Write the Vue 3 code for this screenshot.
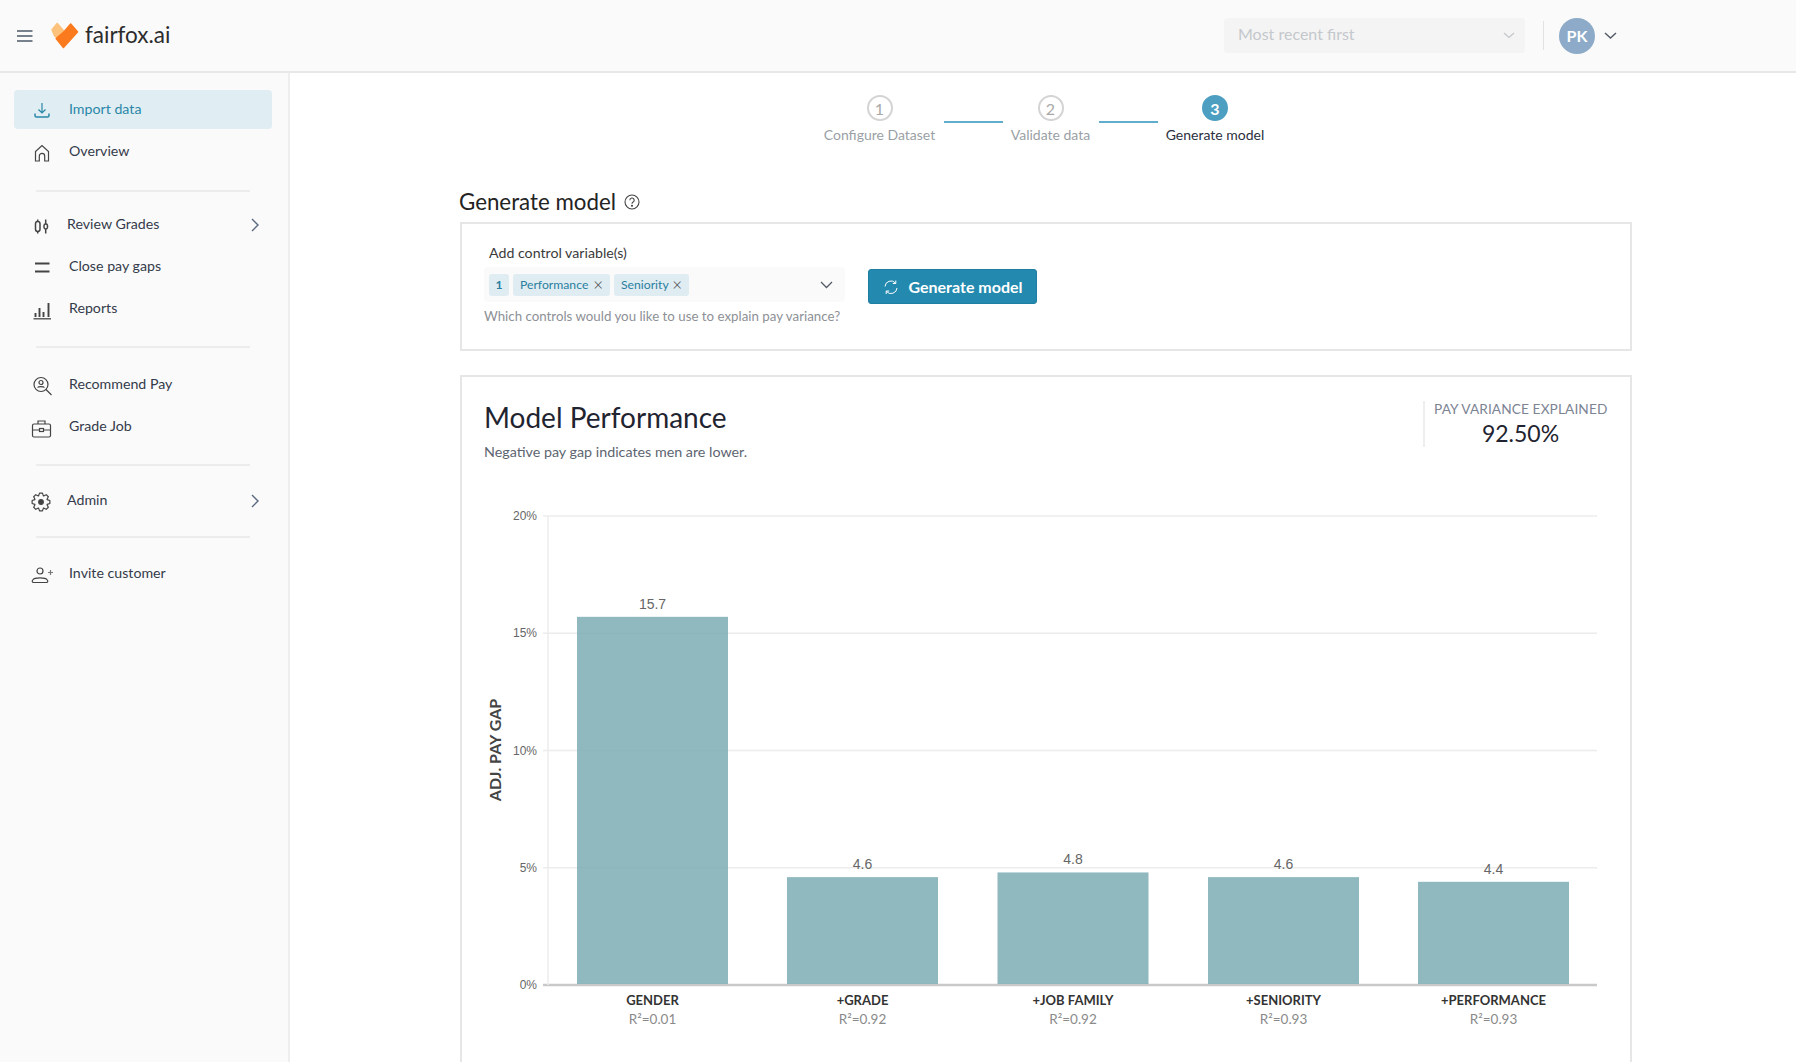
<script setup>
const nav = [
  [{ label: 'Import data', icon: 'import', active: true }, { label: 'Overview', icon: 'home' }],
  [{ label: 'Review Grades', icon: 'grades', arrow: true }, { label: 'Close pay gaps', icon: 'equal' }, { label: 'Reports', icon: 'bars' }],
  [{ label: 'Recommend Pay', icon: 'search' }, { label: 'Grade Job', icon: 'case' }],
  [{ label: 'Admin', icon: 'gear', arrow: true }],
  [{ label: 'Invite customer', icon: 'invite' }],
]
const steps = [
  { n: 1, label: 'Configure Dataset', cls: 's1' },
  { n: 2, label: 'Validate data', cls: 's2' },
  { n: 3, label: 'Generate model', cls: 's3', active: true },
]
const x0 = 548, xEnd = 1597, y0 = 985, unit = 23.45
const ticks = [0, 5, 10, 15, 20].map(v => ({ v, y: y0 - v * unit }))
const bars = [
  { name: 'GENDER', r: 'R²=0.01', v: 15.7, x: 577 },
  { name: '+GRADE', r: 'R²=0.92', v: 4.6, x: 787 },
  { name: '+JOB FAMILY', r: 'R²=0.92', v: 4.8, x: 997.5 },
  { name: '+SENIORITY', r: 'R²=0.93', v: 4.6, x: 1208 },
  { name: '+PERFORMANCE', r: 'R²=0.93', v: 4.4, x: 1418 },
]
const gearPath = (() => {
  const pts = []
  const teeth = 8
  for (let i = 0; i < teeth; i++) {
    const a = (i / teeth) * Math.PI * 2
    const w = Math.PI / teeth
    const p = (r, t) => `${(10 + r * Math.cos(t)).toFixed(2)} ${(11 + r * Math.sin(t)).toFixed(2)}`
    pts.push(p(6.6, a - w * 0.95), p(9, a - w * 0.42), p(9, a + w * 0.42), p(6.6, a + w * 0.95))
  }
  return 'M' + pts.join('L') + 'Z'
})()
</script>

<template>
  <div class="app">
    <header class="top">
      <div class="brand">
        <svg class="menu" width="16" height="12" viewBox="0 0 16 12"><path d="M0 1h15.500M0 6h15.500M0 11h15.500" stroke="#4b5a68" stroke-width="1.400" fill="none"/></svg>
        <svg class="logo" width="29" height="27" viewBox="0 0 28 26">
          <path d="M1 7.500 6 1.500l6.500 7.500-3.500 7.500-5.500-3z" fill="#fdc27c" stroke="#fdc27c" stroke-width="1.500" stroke-linejoin="round"/>
          <path d="M5 16 12 10 19 2l6.500 7.500L12 24.500z" fill="#fb7a1e" stroke="#fb7a1e" stroke-width="1.500" stroke-linejoin="round"/>
        </svg>
        <span class="brand-name">fairfox.ai</span>
      </div>
      <div class="top-right">
        <div class="sort"><span>Most recent first</span>
          <svg width="12" height="7" viewBox="0 0 12 7"><path d="M1 1l5 4.500L11 1" stroke="#c4c7cb" stroke-width="1.300" fill="none"/></svg>
        </div>
        <div class="vsep"></div>
        <div class="avatar">PK</div>
        <svg width="13" height="8" viewBox="0 0 13 8"><path d="M1 1l5.500 5L12 1" stroke="#555c68" stroke-width="1.500" fill="none"/></svg>
      </div>
    </header>
    <div class="body">
      <aside class="side">
        <template v-for="(group, g) in nav" :key="g">
          <div v-if="g" class="rule" :class="'r' + g"></div>
          <ul class="group">
            <li v-for="item in group" :key="item.label" class="item" :class="{ active: item.active, tight: item.arrow }">
              <svg class="ico" width="22" height="22" viewBox="0 0 22 22" fill="none" stroke="currentColor" stroke-width="1.200">
                <template v-if="item.icon === 'import'">
                  <path d="M11 3v10M7.500 9.500l3.500 3.500 3.500-3.500"/><path d="M4 13.500v2a1.500 1.500 0 0 0 1.500 1.500h11a1.500 1.500 0 0 0 1.500-1.500v-2" stroke-width="1.500"/>
                </template>
                <template v-else-if="item.icon === 'home'">
                  <path d="M4.500 19V9.500L11 3.500l6.500 6V19h-3.800v-5a2.700 2.700 0 0 0-5.400 0v5z"/>
                </template>
                <template v-else-if="item.icon === 'grades'">
                  <g stroke-width="1.500"><rect x="4.500" y="6.500" width="4.500" height="10" rx="2.200"/><path d="M6.700 4.500v2M6.700 16.500v2"/><rect x="13" y="9" width="3.500" height="5" rx="1.700"/><path d="M14.700 4.500v4.500M14.700 14v4.500"/></g>
                </template>
                <template v-else-if="item.icon === 'equal'">
                  <path d="M4 6.500h14.500M4 14.500h14.500" stroke-width="2.200"/>
                </template>
                <template v-else-if="item.icon === 'bars'">
                  <path d="M2.500 19.800h17.500" stroke-width="1.300"/><path d="M4.500 18v-4M8.500 18V9M12.500 18v-5M17.500 18V4" stroke-width="1.900"/>
                </template>
                <template v-else-if="item.icon === 'search'">
                  <circle cx="10" cy="9.500" r="7"/><circle cx="10" cy="7.500" r="2"/><path d="M6.500 12.500c1-1.300 6-1.300 7 0M15 14.500l5.500 5.500"/>
                </template>
                <template v-else-if="item.icon === 'case'">
                  <rect x="1.500" y="7" width="18" height="13" rx="1.500"/><path d="M7 7V4h7v3M1.500 13h7M12.500 13h7"/><rect x="8.500" y="11.500" width="4" height="3"/>
                </template>
                <template v-else-if="item.icon === 'gear'">
                  <path :d="gearPath" stroke-linejoin="round"/><circle cx="10" cy="11" r="2.300" fill="currentColor"/>
                </template>
                <template v-else>
                  <circle cx="9" cy="7" r="3"/><path d="M2.500 18.500c-1.500 0-1.500-1.500-.8-2.500 1.800-2.800 12.800-2.800 14.600 0 .7 1 .7 2.500-.8 2.500z"/><path d="M17 8.500h5M19.500 6v5" stroke="#777"/>
                </template>
              </svg>
              <span>{{ item.label }}</span>
              <svg v-if="item.arrow" class="arrow" width="8" height="14" viewBox="0 0 8 14"><path d="M1 1l6 6-6 6" stroke="#5a6a80" stroke-width="1.400" fill="none"/></svg>
            </li>
          </ul>
        </template>
      </aside>
      <main class="main">
        <div class="steps">
          <template v-for="(s, i) in steps" :key="s.n">
            <div v-if="i" class="step-line"></div>
            <div class="step" :class="[s.cls, { on: s.active }]">
              <div class="dot">{{ s.n }}</div>
              <div class="step-label">{{ s.label }}</div>
            </div>
          </template>
        </div>
        <h2 class="h2">Generate model
          <svg width="16" height="16" viewBox="0 0 16 16" fill="none" stroke="#444" stroke-width="1.100"><circle cx="8" cy="8" r="7"/><path d="M5.800 6.200a2.200 2.200 0 1 1 3.300 1.900c-.7.400-1.100.8-1.100 1.600"/><circle cx="8" cy="11.800" r=".5" fill="#444"/></svg>
        </h2>
        <section class="card form">
          <div class="field">
            <label>Add control variable(s)</label>
            <div class="select">
              <span class="tag num">1</span>
              <span class="tag t1">Performance <i>×</i></span>
              <span class="tag t2">Seniority <i>×</i></span>
              <svg class="caret" width="13" height="8" viewBox="0 0 13 8"><path d="M1 1l5.500 5.500L12 1" stroke="#555c68" stroke-width="1.300" fill="none"/></svg>
            </div>
            <p class="hint">Which controls would you like to use to explain pay variance?</p>
          </div>
          <button class="btn">
            <svg width="18" height="18" viewBox="0 0 18 18" fill="none" stroke="#fff" stroke-width="1"><path d="M3 8.500a6 6 0 0 1 10.500-3.500M15 10a6 6 0 0 1-10.500 3.500"/><path d="M13.800 2.500v3h-3M4.200 16v-3h3"/></svg>
            Generate model
          </button>
        </section>
        <section class="card perf">
          <div class="perf-head">
            <div>
              <h3>Model Performance</h3>
              <p>Negative pay gap indicates men are lower.</p>
            </div>
            <div class="kpi">
              <div class="kpi-label">PAY VARIANCE EXPLAINED</div>
              <div class="kpi-value">92.50%</div>
            </div>
          </div>
          <svg class="chart" width="1150" height="562" viewBox="470 500 1150 562">
            <g v-for="t in ticks" :key="t.v">
              <line :x1="x0 - 5" :x2="xEnd" :y1="t.y" :y2="t.y" :stroke="t.v ? '#ececec' : '#c9c9c9'" :stroke-width="t.v ? 1.500 : 2.500"/>
              <text :x="x0 - 11" :y="t.y + 4" text-anchor="end" class="tick">{{ t.v }}%</text>
            </g>
            <line :x1="x0" :x2="x0" :y1="ticks[4].y" :y2="y0" stroke="#ececec" stroke-width="1.500"/>
            <text class="axis" transform="translate(501 750) rotate(-90)" text-anchor="middle">ADJ. PAY GAP</text>
            <g v-for="b in bars" :key="b.name">
              <rect :x="b.x" :y="y0 - b.v * unit" width="151" :height="b.v * unit - 1" fill="rgba(124,172,180,.85)"/>
              <text :x="b.x + 75.500" :y="y0 - b.v * unit - 8" text-anchor="middle" class="val">{{ b.v }}</text>
              <text :x="b.x + 75.500" y="1005" text-anchor="middle" class="name">{{ b.name }}</text>
              <text :x="b.x + 75.500" y="1024" text-anchor="middle" class="r2">{{ b.r }}</text>
            </g>
          </svg>
        </section>
      </main>
    </div>
  </div>
</template>

<style>
html, body { margin: 0; height: 100%; overflow: hidden; background: #fff; }
</style>

<style scoped>
.app { width: 1796px; height: 1062px; overflow: hidden; font-family: Lato, "Noto Sans", sans-serif; color: #2b3140; }
.top { height: 73px; box-sizing: border-box; border-bottom: 2px solid #e8e8e8; background: #fafafa; display: flex; justify-content: space-between; align-items: center; }
.brand { display: flex; align-items: center; padding-left: 17px; }
.logo { margin-left: 18px; margin-right: 5px; }
.brand-name { font-size: 22.500px; color: #2c2c2c; margin-top: -3px; }
.top-right { display: flex; align-items: center; margin-right: 179px; }
.sort { width: 301px; height: 35px; box-sizing: border-box; padding: 0 10px 0 14px; background: #f4f4f4; border-radius: 4px; display: flex; align-items: center; justify-content: space-between; color: #c4c8cc; font-size: 16px; }
.sort span { margin-top: -4px; }
.vsep { width: 1px; height: 29px; background: #e2e2e2; margin: 0 15px 0 18px; }
.avatar { width: 36px; height: 36px; border-radius: 50%; background: #8dabc8; color: #fff; font-weight: 700; font-size: 16px; display: flex; align-items: center; justify-content: center; margin-right: 9px; }
.body { display: flex; height: 989px; }
.side { width: 290px; flex: none; box-sizing: border-box; background: #fafafa; border-right: 2px solid #eee; padding-top: 17px; }
.group { list-style: none; margin: 0; padding: 0 16px 0 14px; display: flex; flex-direction: column; gap: 3px; }
.item { height: 39px; display: flex; align-items: center; padding-left: 17px; font-size: 14.200px; border-radius: 4px; color: #343b4a; position: relative; }
.item > span { margin-top: -2px; }
.item .ico { flex: none; margin: 3px 16px 0 0; color: #444; }
.item.tight .ico { margin-right: 14px; }
.item.active { background: #e0edf3; color: #2a87a8; }
.item.active .ico { color: #2a87a8; }
.arrow { position: absolute; right: 13px; }
.rule { height: 2px; background: #ececec; margin: 19px 38px 15px 36px; }
.r1 { margin-bottom: 13px; }
.r2 { margin-top: 18px; margin-bottom: 17px; }
.r3 { margin-top: 18px; margin-bottom: 15px; }
.r4 { margin-top: 16px; margin-bottom: 16px; }
.main { flex: 1; min-width: 0; box-sizing: border-box; padding: 0 164px 0 170px; }
.steps { display: flex; justify-content: center; align-items: flex-start; gap: 8px; padding: 22px 4px 0 0; height: 112px; box-sizing: border-box; }
.step { display: flex; flex-direction: column; align-items: center; font-size: 14px; color: #9a9fa6; white-space: nowrap; }
.s1 { width: 112px; }
.s2 { width: 80px; }
.s3 { width: 99px; }
.dot { width: 26px; height: 26px; box-sizing: border-box; border: 2px solid #d4d4d4; border-radius: 50%; display: flex; align-items: center; justify-content: center; font-size: 16px; color: #a8a8a8; margin-bottom: 5px; }
.step.on { color: #2b3140; }
.step.on .dot { background: #4d9fc2; border-color: #4d9fc2; color: #fff; font-weight: 700; }
.step-line { width: 59px; height: 2px; background: #62adcc; margin: 26px 0 0; }
.h2 { font-size: 22.300px; font-weight: 400; margin: 0 0 4px -1px; height: 33px; line-height: 33px; color: #232323; display: flex; align-items: center; gap: 8px; }
.card { border: 2px solid #e6e6e6; background: #fff; box-sizing: border-box; }
.form { height: 129px; display: flex; align-items: flex-start; padding: 20px 0 0 22px; margin-bottom: 24px; }
.field { width: 361px; }
.field label { display: block; font-size: 14.200px; margin-left: 5px; height: 23px; line-height: 18px; color: #3a3a3a; }
.select { height: 35px; background: #fafafa; border-radius: 4px; display: flex; align-items: center; gap: 4px; padding: 0 5px; position: relative; }
.tag { background: #dfecf2; color: #2a7f9f; font-size: 12.200px; height: 22px; border-radius: 3px; padding: 0 7px; display: flex; align-items: center; justify-content: space-between; box-sizing: border-box; }
.num { width: 20px; justify-content: center; font-weight: 700; padding: 0; }
.t1 { width: 97px; }
.t2 { width: 75px; }
.tag i { font-style: normal; color: #444; font-size: 17px; font-weight: 300; }
.caret { position: absolute; right: 12px; top: 14px; }
.hint { margin: 6px 0 0; font-size: 13.300px; color: #8d9096; white-space: nowrap; }
.btn { margin: 25px 0 0 23px; width: 169px; height: 35px; background: #2389ae; border: 1px solid #1f7fa2; border-radius: 3px; color: #fff; font: 700 16px Lato, sans-serif; display: flex; align-items: center; justify-content: center; gap: 8px; padding: 0; }
.perf { height: 720px; padding: 22px 23px 0 22px; }
.perf-head { display: flex; justify-content: space-between; height: 101px; }
h3 { font-size: 28px; font-weight: 400; margin: 0; line-height: 36px; color: #1f2430; }
.perf-head p { margin: 8px 0 0; font-size: 14.300px; color: #5d6570; }
.kpi { border-left: 2px solid #eee; padding-left: 9px; height: 46px; width: 184px; box-sizing: border-box; margin-top: 2px; }
.kpi-label { font-size: 13.700px; letter-spacing: .1px; color: #7c8494; line-height: 17px; white-space: nowrap; text-align: center; margin-top: -1px; }
.kpi-value { font-size: 23px; text-align: center; color: #1f2430; line-height: 32px; }
.chart { display: block; margin-left: -14px; font-family: "Liberation Sans", sans-serif; }
.tick { font-size: 12px; fill: #666; }
.val { font-size: 14px; fill: #666; }
.axis { font: 700 16px Lato, sans-serif; fill: #444; }
.name { font: 700 13px Lato, sans-serif; fill: #333; }
.r2 { font: 400 13.500px Lato, sans-serif; fill: #8a8a8a; }
</style>
